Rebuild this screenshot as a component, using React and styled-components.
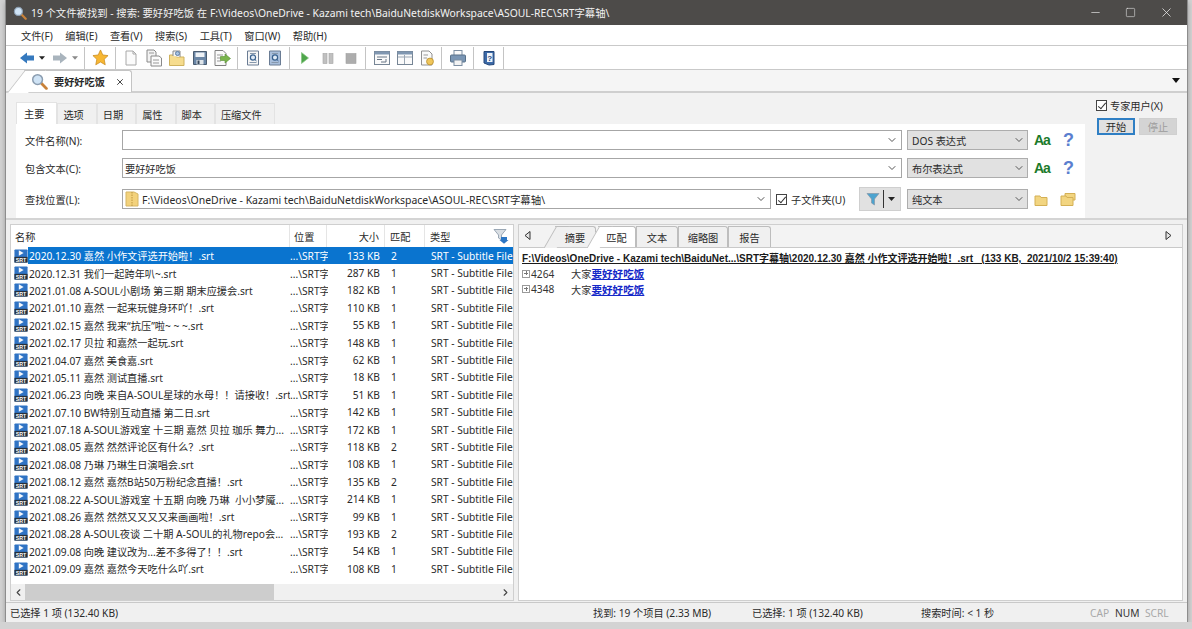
import React from "react";
import styled, { createGlobalStyle } from "styled-components";
import { Minus, Square, X, ChevronDown, ChevronLeft, ChevronRight } from "lucide-react";

const FONT = `"Noto Sans", "Noto Sans CJK SC", sans-serif`;

const MENUS = ["文件(F)", "编辑(E)", "查看(V)", "搜索(S)", "工具(T)", "窗口(W)", "帮助(H)"];
const SEARCH_TABS = ["主要", "选项", "日期", "属性", "脚本", "压缩文件"];
const PREVIEW_TABS = [
  { label: "摘要", width: 41 },
  { label: "匹配", width: 38, active: true },
  { label: "文本", width: 42 },
  { label: "缩略图", width: 50 },
  { label: "报告", width: 43 },
];

const FILES = [
  ["2020.12.30 嘉然 小作文评选开始啦！.srt", "133 KB", 2],
  ["2020.12.31 我们一起跨年叭~.srt", "287 KB", 1],
  ["2021.01.08 A-SOUL小剧场 第三期 期末应援会.srt", "182 KB", 1],
  ["2021.01.10 嘉然 一起来玩健身环吖！.srt", "110 KB", 1],
  ["2021.02.15 嘉然 我来“抗压”啦~ ~ ~.srt", "55 KB", 1],
  ["2021.02.17 贝拉 和嘉然一起玩.srt", "148 KB", 1],
  ["2021.04.07 嘉然 美食嘉.srt", "62 KB", 1],
  ["2021.05.11 嘉然 测试直播.srt", "18 KB", 1],
  ["2021.06.23 向晚 来自A-SOUL星球的水母！！请接收！.srt", "51 KB", 1],
  ["2021.07.10 BW特别互动直播 第二日.srt", "142 KB", 1],
  ["2021.07.18 A-SOUL游戏室 十三期 嘉然 贝拉 珈乐 舞力...", "172 KB", 1],
  ["2021.08.05 嘉然 然然评论区有什么？.srt", "118 KB", 2],
  ["2021.08.08 乃琳 乃琳生日演唱会.srt", "108 KB", 1],
  ["2021.08.12 嘉然 嘉然B站50万粉纪念直播！.srt", "135 KB", 2],
  ["2021.08.22 A-SOUL游戏室 十五期 向晚 乃琳  小小梦魇...", "214 KB", 1],
  ["2021.08.26 嘉然 然然又又又又来画画啦！.srt", "99 KB", 1],
  ["2021.08.28 A-SOUL夜谈 二十期 A-SOUL的礼物repo会...", "193 KB", 2],
  ["2021.09.08 向晚 建议改为...差不多得了！！.srt", "54 KB", 1],
  ["2021.09.09 嘉然 嘉然今天吃什么吖.srt", "108 KB", 1],
];

export default function App() {
  return (
    <>
      <GlobalStyle />
      <Window>
        <TitleBar>
          <Magnifier size={14} />
          <TitleText>19 个文件被找到 - 搜索: 要好好吃饭 在 F:\Videos\OneDrive - Kazami tech\BaiduNetdiskWorkspace\ASOUL-REC\SRT字幕轴\</TitleText>
          <WindowButtons>
            <Minus size={13} strokeWidth={1.2} />
            <Square size={11} strokeWidth={1.2} />
            <X size={15} strokeWidth={1.2} />
          </WindowButtons>
        </TitleBar>

        <MenuBar>
          {MENUS.map((m) => (
            <MenuItem key={m}>{m}</MenuItem>
          ))}
        </MenuBar>

        <ToolBar>
          <ToolGroup $gap={4}>
            <ArrowIcon color="#3579be" />
            <TinyCaret />
            <ForwardSlot>
              <ArrowIcon color="#a9b4bd" flip />
            </ForwardSlot>
            <TinyCaret light />
          </ToolGroup>
          <ToolGroup>
            <StarIcon />
          </ToolGroup>
          <ToolGroup $gap={5.5}>
            <DocIcon />
            <DocsIcon />
            <OpenIcon />
            <SaveIcon />
            <ExportIcon />
          </ToolGroup>
          <ToolGroup>
            <ReportIcon fill="#f6f6f6" />
            <ReportIcon fill="#a9bfdc" />
          </ToolGroup>
          <ToolGroup $gap={7}>
            <PlayIcon />
            <PauseIcon />
            <StopIcon />
          </ToolGroup>
          <ToolGroup $gap={5}>
            <PanelIcon />
            <PanelIcon split />
            <SettingsDocIcon />
          </ToolGroup>
          <ToolGroup>
            <PrinterIcon />
          </ToolGroup>
          <ToolGroup>
            <HelpBookIcon />
          </ToolGroup>
        </ToolBar>

        <DocStrip>
          <DocTab>
            <Magnifier size={17} />
            <DocTabLabel>要好好吃饭</DocTabLabel>
            <X size={10} strokeWidth={2} color="#222" />
          </DocTab>
          <StripCaret />
        </DocStrip>

        <SearchPanel>
          <SearchMain>
            <SearchTabs>
              {SEARCH_TABS.map((t, i) => (
                <SearchTab key={t} $active={i === 0}>{t}</SearchTab>
              ))}
            </SearchTabs>
            <SearchForm>
              <FormRow>
                <FieldLabel>文件名称(N):</FieldLabel>
                <ComboInput>
                  <ChevronDown size={12} color="#555" />
                </ComboInput>
                <GraySelect>
                  DOS 表达式
                  <ChevronDown size={12} color="#555" />
                </GraySelect>
                <CaseToggle>Aa</CaseToggle>
                <HelpMark>?</HelpMark>
              </FormRow>
              <FormRow>
                <FieldLabel>包含文本(C):</FieldLabel>
                <ComboInput>
                  <span>要好好吃饭</span>
                  <ChevronDown size={12} color="#555" />
                </ComboInput>
                <GraySelect>
                  布尔表达式
                  <ChevronDown size={12} color="#555" />
                </GraySelect>
                <CaseToggle>Aa</CaseToggle>
                <HelpMark>?</HelpMark>
              </FormRow>
              <LocationRow>
                <FieldLabel>查找位置(L):</FieldLabel>
                <LocationInput>
                  <FolderTreeIcon />
                  <LocationText>F:\Videos\OneDrive - Kazami tech\BaiduNetdiskWorkspace\ASOUL-REC\SRT字幕轴\</LocationText>
                  <ChevronDown size={12} color="#555" />
                </LocationInput>
                <SubfolderLabel>
                  <CheckBox />
                  子文件夹(U)
                </SubfolderLabel>
                <FilterButton>
                  <FilterIcon />
                  <FilterDivider />
                  <TinyCaret dark />
                </FilterButton>
                <GraySelect>
                  纯文本
                  <ChevronDown size={12} color="#555" />
                </GraySelect>
                <FolderPair>
                  <FolderIcon />
                  <FolderIcon stacked />
                </FolderPair>
              </LocationRow>
            </SearchForm>
          </SearchMain>
          <ExpertSide>
            <CheckLabel>
              <CheckBox />
              专家用户(X)
            </CheckLabel>
            <ButtonRow>
              <StartButton>开始</StartButton>
              <StopButton>停止</StopButton>
            </ButtonRow>
          </ExpertSide>
        </SearchPanel>

        <Panes>
          <ResultsPane>
            <ListHead>
              <NameHead>名称</NameHead>
              <PathHead>位置</PathHead>
              <SizeHead>大小</SizeHead>
              <HitsHead>匹配</HitsHead>
              <TypeHead>
                类型
                <FunnelBadge />
              </TypeHead>
            </ListHead>
            <ListBody>
              {FILES.map(([name, size, hits], i) => (
                <FileRow key={name}>
                  <SrtIcon />
                  <RowCells $selected={i === 0}>
                    <NameCell>{name}</NameCell>
                    <PathCell>...\SRT字</PathCell>
                    <SizeCell>{size}</SizeCell>
                    <HitsCell>{hits}</HitsCell>
                    <TypeCell>SRT - Subtitle File</TypeCell>
                  </RowCells>
                </FileRow>
              ))}
            </ListBody>
            <ScrollBar>
              <ChevronLeft size={11} color="#444" strokeWidth={2.4} />
              <ScrollTrack>
                <ScrollThumb />
              </ScrollTrack>
              <ChevronRight size={11} color="#444" strokeWidth={2.4} />
            </ScrollBar>
          </ResultsPane>

          <PreviewPane>
            <PreviewStrip>
              <StripArrow points="6,0.5 1,4.5 6,8.5" />
              <PreviewTabs>
                {PREVIEW_TABS.map((t, i) => (
                  <PreviewTab key={t.label} $w={t.width} $active={t.active} $slant={i < 2}>{t.label}</PreviewTab>
                ))}
              </PreviewTabs>
              <StripArrow points="1,0.5 6,4.5 1,8.5" />
            </PreviewStrip>
            <PreviewBody>
              <PreviewPath>F:\Videos\OneDrive - Kazami tech\BaiduNet...\SRT字幕轴\2020.12.30 嘉然 小作文评选开始啦！.srt   (133 KB,  2021/10/2 15:39:40)</PreviewPath>
              <MatchLine>
                <ExpandBox />
                <LineNo>4264</LineNo>
                <span>大家</span>
                <MatchHit>要好好吃饭</MatchHit>
              </MatchLine>
              <MatchLine>
                <ExpandBox />
                <LineNo>4348</LineNo>
                <span>大家</span>
                <MatchHit>要好好吃饭</MatchHit>
              </MatchLine>
            </PreviewBody>
          </PreviewPane>
        </Panes>

        <StatusBar>
          <StatusSelected>已选择 1 项 (132.40 KB)</StatusSelected>
          <StatusFound>找到: 19 个项目 (2.33 MB)</StatusFound>
          <StatusPicked>已选择: 1 项 (132.40 KB)</StatusPicked>
          <StatusTime>搜索时间: &lt; 1 秒</StatusTime>
          <LockKey $w={25}>CAP</LockKey>
          <LockKey $w={30} $on>NUM</LockKey>
          <LockKey $w={30}>SCRL</LockKey>
        </StatusBar>
      </Window>
    </>
  );
}

// Icons
function Magnifier({ size }) {
  return (
    <svg width={size} height={size} viewBox="0 0 16 16">
      <path d="M9.5 9.5 L14.5 14.5" stroke="#c8823a" strokeWidth="2.6" strokeLinecap="round" />
      <circle cx="6.2" cy="6.2" r="4.6" fill="#cfe3f5" stroke="#8b9db0" strokeWidth="1.4" />
    </svg>
  );
}
function ArrowIcon({ color, flip }) {
  return (
    <IconSvg viewBox="0 0 16 16" style={{ transform: flip ? "scaleX(-1)" : undefined }}>
      <path d="M1 8 L8 2.5 V5.5 H15 V10.5 H8 V13.5 Z" fill={color} />
    </IconSvg>
  );
}
function StarIcon() {
  return (
    <IconSvg viewBox="0 0 18 18" $size={17}>
      <path d="M9 1 L11.4 6.3 L17 7 L12.9 10.9 L14 16.7 L9 13.8 L4 16.7 L5.1 10.9 L1 7 L6.6 6.3 Z" fill="#f7b733" stroke="#c98a1d" strokeWidth="0.8" />
    </IconSvg>
  );
}
function DocIcon() {
  return (
    <IconSvg viewBox="0 0 16 16">
      <path d="M3 1 H10 L13 4 V15 H3 Z" fill="#fbfbfb" stroke="#a8a8a8" />
      <path d="M10 1 V4 H13" fill="none" stroke="#a8a8a8" />
    </IconSvg>
  );
}
function DocsIcon() {
  return (
    <IconSvg viewBox="0 0 18 18" $size={18}>
      <path d="M2 1 H9 L11 3 V13 H2 Z" fill="#f3f3f3" stroke="#8a8a8a" />
      <path d="M6 7 H14 L16.5 9 V17 H6 Z" fill="#fbfbfb" stroke="#8a8a8a" />
      <path d="M4 4 H9 M8 11 H14 M8 14 H14" stroke="#999" />
    </IconSvg>
  );
}
function OpenIcon() {
  return (
    <IconSvg viewBox="0 0 18 18" $size={18}>
      <path d="M1.5 6 H7 L8.5 8 H16 V16.5 H1.5 Z" fill="#f6dc8e" stroke="#cfb25e" />
      <path d="M5 7 V2 H12 V8" fill="#f4f4f4" stroke="#8a8a8a" />
      <circle cx="9.5" cy="4.5" r="2" fill="#a9c4e3" stroke="#5c7ea6" />
    </IconSvg>
  );
}
function SaveIcon() {
  return (
    <IconSvg viewBox="0 0 16 16">
      <path d="M1.5 1.5 H14.5 V14.5 H1.5 Z" fill="#6a86a6" stroke="#4a5c70" />
      <rect x="3.5" y="2.5" width="9" height="4.5" fill="#eef2f6" />
      <rect x="4.5" y="10" width="7" height="4.5" fill="#dfe5ea" />
      <rect x="5.5" y="10.5" width="2" height="3.5" fill="#37475a" />
    </IconSvg>
  );
}
function ExportIcon() {
  return (
    <IconSvg viewBox="0 0 18 18" $size={18}>
      <path d="M2 1.5 H10 L13 4.5 V16.5 H2 Z" fill="#fafafa" stroke="#808080" />
      <path d="M4 6 H10 M4 9 H8 M4 12 H8" stroke="#999" />
      <path d="M7.5 7.5 H12 V5 L17.5 9.5 L12 14 V11.5 H7.5 Z" fill="#7ab54c" stroke="#568f30" strokeWidth="0.6" />
    </IconSvg>
  );
}
function ReportIcon({ fill }) {
  return (
    <IconSvg viewBox="0 0 16 16">
      <path d="M2.5 1 H13.5 V15 H2.5 Z" fill={fill} stroke="#6a7c94" />
      <path d="M5 3.5 H11 M4.5 12.5 H11.5" stroke="#8798ac" />
      <circle cx="8" cy="7.5" r="2.6" fill="#dfeaf6" stroke="#38618f" strokeWidth="1.2" />
      <path d="M9.8 9.5 L11.5 11" stroke="#38618f" />
    </IconSvg>
  );
}
function PlayIcon() {
  return (
    <IconSvg viewBox="0 0 16 16">
      <path d="M4.5 2.5 L11.5 8 L4.5 13.5 Z" fill="#4fa64b" stroke="#85c583" strokeWidth="0.7" />
    </IconSvg>
  );
}
function PauseIcon() {
  return (
    <IconSvg viewBox="0 0 16 16">
      <rect x="3" y="3.5" width="4" height="10" fill="#c0c0c0" stroke="#a3a3a3" strokeWidth="0.6" />
      <rect x="9" y="3.5" width="4" height="10" fill="#c0c0c0" stroke="#a3a3a3" strokeWidth="0.6" />
    </IconSvg>
  );
}
function StopIcon() {
  return (
    <IconSvg viewBox="0 0 16 16">
      <rect x="3" y="3.5" width="10" height="10" fill="#adadad" stroke="#a0a0a0" strokeWidth="0.6" />
    </IconSvg>
  );
}
function PanelIcon({ split }) {
  return (
    <IconSvg viewBox="0 0 18 18" $size={18}>
      <rect x="1.5" y="2.5" width="15" height="13" fill="#fafafa" stroke="#768595" />
      <rect x="1.5" y="2.5" width="15" height="3" fill="#8097b1" />
      {split ? (
        <path d="M8.5 6 V15 M2 8 H16" stroke="#9aa6b3" />
      ) : (
        <path d="M4 8 H14 M4 10.5 H9 M13 10 V13 H8" stroke="#687686" fill="none" />
      )}
    </IconSvg>
  );
}
function SettingsDocIcon() {
  return (
    <IconSvg viewBox="0 0 16 16">
      <path d="M2.5 1 H10 L13 4 V15 H2.5 Z" fill="#fafafa" stroke="#909090" />
      <path d="M4.5 5 H9 M4.5 8 H8" stroke="#999" />
      <circle cx="11" cy="11.5" r="3.4" fill="#f0c65a" stroke="#c39a3a" />
    </IconSvg>
  );
}
function PrinterIcon() {
  return (
    <IconSvg viewBox="0 0 18 18" $size={18}>
      <rect x="5" y="1.5" width="8" height="5" fill="#fafafa" stroke="#7d8fa3" />
      <rect x="1.5" y="6" width="15" height="7" rx="1" fill="#7a96b5" stroke="#587189" />
      <rect x="5" y="11" width="8" height="5.5" fill="#f3f3f3" stroke="#7d8fa3" />
    </IconSvg>
  );
}
function HelpBookIcon() {
  return (
    <IconSvg viewBox="0 0 16 16">
      <path d="M3 1.5 H13 V14.5 L8 15 L3 13 Z" fill="#3c6aa8" stroke="#24477a" />
      <rect x="6" y="3" width="5.5" height="9" fill="#eef3f9" />
      <text x="8.7" y="10.5" fontSize="8" fontWeight="700" textAnchor="middle" fill="#24477a" fontFamily="Liberation Sans">?</text>
    </IconSvg>
  );
}
function TinyCaret({ light, dark }) {
  return (
    <CaretSvg viewBox="0 0 7 4" $w={dark ? 9 : 6}>
      <path d="M0 0 H7 L3.5 4 Z" fill={light ? "#8a8a8a" : "#222"} />
    </CaretSvg>
  );
}
function FolderTreeIcon() {
  return (
    <svg width="14" height="16" viewBox="0 0 14 16">
      <path d="M1 1 H9 L13 3 V15 H1 Z" fill="#f3d27c" stroke="#d6b665" />
      <path d="M7 1 V15" stroke="#bd9640" strokeDasharray="1.5 1" />
    </svg>
  );
}
function FolderIcon({ stacked }) {
  return (
    <svg width="16" height="15" viewBox="0 0 16 15">
      {stacked && <path d="M5 1.5 H15 V8 H5 Z" fill="#f2d581" stroke="#d4b055" />}
      <path d="M1 4 H6 L7 5.5 H13 V13.5 H1 Z" fill="#f2d581" stroke="#d4b055" />
    </svg>
  );
}
function FilterIcon() {
  return (
    <svg width="14" height="14" viewBox="0 0 14 14">
      <path d="M1 1.5 H13 L8.5 7 V13 L5.5 11 V7 Z" fill="#4ca3cf" stroke="#8796a6" strokeWidth="0.7" />
    </svg>
  );
}
function FunnelBadge() {
  return (
    <BadgeSvg viewBox="0 0 16 16">
      <path d="M1 1.5 H13 L8.5 7 V12 L5.5 10 V7 Z" fill="#d9dee3" stroke="#8796a6" strokeWidth="0.8" />
      <path d="M8 9 H14 V12 H15.5 L11 15.8 L6.5 12 H8 Z" fill="#2c76c4" />
    </BadgeSvg>
  );
}
function SrtIcon() {
  return (
    <SrtSvg viewBox="0 0 16 16">
      <rect x="0.5" y="0.5" width="15" height="15" rx="1" fill="#2f73c4" />
      <path d="M5.5 1.5 L11 4.6 L5.5 7.6 Z" fill="#f5f8fc" />
      <rect x="0.5" y="9" width="15" height="6.5" fill="#27303a" />
      <text x="8" y="14.6" fontSize="6" fontWeight="700" textAnchor="middle" fill="#fff" fontFamily="Liberation Sans">SRT</text>
    </SrtSvg>
  );
}
function StripArrow({ points }) {
  return (
    <ArrowSvg viewBox="0 0 7 9">
      <polygon points={points} fill="#e4e4e4" stroke="#333" />
    </ArrowSvg>
  );
}

// Styled Components
const GlobalStyle = createGlobalStyle`
  html, body {
    margin: 0;
    padding: 0;
    background: #d3d3d3;
    overflow: hidden;
  }
  * {
    box-sizing: border-box;
  }
`;

const Window = styled.div`
  width: 1181px;
  height: 622px;
  margin-left: 6px;
  display: flex;
  flex-direction: column;
  background: #f0f0f0;
  font-family: ${FONT};
  font-size: 10.2px;
  color: #2a2a2a;
  box-shadow: 0 0 0 1px #8d8d8d, 0 2px 6px rgba(0, 0, 0, 0.35);
`;

const TitleBar = styled.div`
  height: 25px;
  flex: none;
  background: #4d4b49;
  color: #f2f2f2;
  display: flex;
  align-items: center;
  padding-left: 7px;
  gap: 4px;
`;

const TitleText = styled.div`
  font-size: 10.35px;
  white-space: pre;
`;

const WindowButtons = styled.div`
  margin-left: auto;
  display: flex;
  align-items: center;
  gap: 23px;
  padding-right: 13px;
  color: #eee;
`;

const MenuBar = styled.div`
  height: 21px;
  flex: none;
  background: #fff;
  border-bottom: 1px solid #c9c9c9;
  display: flex;
  align-items: center;
  padding-left: 15px;
  gap: 12.5px;
`;

const MenuItem = styled.span`
  white-space: nowrap;
`;

const ToolBar = styled.div`
  height: 24px;
  flex: none;
  background: #fff;
  border-bottom: 1px solid #c9c9c9;
  display: flex;
  align-items: center;
  padding-left: 6px;
`;

const ToolGroup = styled.div`
  display: flex;
  align-items: center;
  gap: ${(p) => p.$gap ?? 6}px;
  padding: 0 6px 0 7px;
  height: 22px;
  border-right: 1px solid #c4c4c4;
`;

const ForwardSlot = styled.span`
  display: flex;
  margin-left: 3px;
`;

const IconSvg = styled.svg`
  width: ${(p) => p.$size || 16}px;
  height: ${(p) => p.$size || 16}px;
  flex: none;
`;

const CaretSvg = styled.svg`
  width: ${(p) => p.$w}px;
  height: 4px;
  flex: none;
`;

const DocStrip = styled.div`
  height: 23px;
  flex: none;
  background: #f5f5f5;
  border-bottom: 2px solid #cfcfcf;
  display: flex;
  align-items: flex-end;
  justify-content: space-between;
  padding: 0 7px 0 18px;
`;

const DocTab = styled.div`
  position: relative;
  z-index: 0;
  width: 108px;
  height: 22px;
  margin-bottom: -1px;
  display: flex;
  align-items: center;
  padding-left: 7px;
  background: #fff;
  border: 1px solid #c4c4c4;
  border-left: none;
  border-bottom: none;
  border-radius: 0 3px 0 0;

  &::before {
    content: "";
    position: absolute;
    z-index: -1;
    left: -8px;
    top: -1px;
    width: 20px;
    height: 22px;
    background: #fff;
    border-left: 1px solid #c4c4c4;
    border-top: 1px solid #c4c4c4;
    transform: skewX(-38deg);
  }
`;

const DocTabLabel = styled.span`
  font-weight: 700;
  margin: 0 10px 0 6px;
`;

const StripCaret = styled.div`
  width: 0;
  height: 0;
  margin-bottom: 8px;
  border-left: 4px solid transparent;
  border-right: 4px solid transparent;
  border-top: 5px solid #111;
`;

const SearchPanel = styled.div`
  height: 127px;
  flex: none;
  display: flex;
  padding: 10px 0 0 10px;
  background: #f2f2f2;
  border-bottom: 2px solid #d4d4d4;
`;

const SearchMain = styled.div`
  width: 1069px;
  display: flex;
  flex-direction: column;
`;

const SearchTabs = styled.div`
  display: flex;
  height: 21px;
  flex: none;
`;

const SearchTab = styled.div`
  display: flex;
  align-items: center;
  white-space: nowrap;
  padding: 0 12px 0 ${(p) => (p.$active ? "7px" : "5px")};
  background: ${(p) => (p.$active ? "#fff" : "#f0f0f0")};
  border: 1px solid #e3e3e3;
  border-bottom: none;
  margin-top: ${(p) => (p.$active ? "-1px" : "0")};
`;

const SearchForm = styled.div`
  flex: 1;
  background: #fff;
  padding: 6px 0 0 9px;
  display: flex;
  flex-direction: column;
  gap: 8px;
`;

const FormRow = styled.div`
  display: flex;
  align-items: center;
  height: 20px;
`;

const LocationRow = styled(FormRow)`
  margin-top: 3px;
`;

const FieldLabel = styled.div`
  width: 97px;
  flex: none;
`;

const ComboInput = styled.div`
  width: 780px;
  height: 20px;
  flex: none;
  display: flex;
  align-items: center;
  padding: 0 3px 0 2px;
  background: #fff;
  border: 1px solid #a6a6a6;

  svg:last-child {
    margin-left: auto;
  }
`;

const LocationInput = styled(ComboInput)`
  width: 649px;
  gap: 3px;
`;

const LocationText = styled.span`
  font-size: 10.45px;
  white-space: pre;
`;

const GraySelect = styled.div`
  width: 121px;
  height: 20px;
  flex: none;
  margin-left: 5px;
  padding: 0 2px 0 4px;
  display: flex;
  align-items: center;
  justify-content: space-between;
  background: #e1e1e1;
  border: 1px solid #adadad;
`;

const CaseToggle = styled.span`
  width: 14px;
  margin-left: 6px;
  font: 700 14px "Liberation Sans", sans-serif;
  letter-spacing: -1px;
  color: #1c7a2b;
  white-space: nowrap;
`;

const HelpMark = styled.span`
  margin-left: 15px;
  font: 700 18px "Liberation Sans", sans-serif;
  color: #5b7fcf;
`;

const CheckLabel = styled.label`
  display: flex;
  align-items: center;
  gap: 3px;
  white-space: nowrap;
`;

const SubfolderLabel = styled(CheckLabel)`
  width: 83px;
  flex: none;
  margin-left: 5px;
  gap: 4px;
`;

const CheckBox = styled.span`
  position: relative;
  width: 11px;
  height: 11px;
  flex: none;
  background: #fff;
  border: 1px solid #444;

  &::after {
    content: "";
    position: absolute;
    left: 3px;
    top: 0;
    width: 3px;
    height: 7px;
    border: solid #333;
    border-width: 0 1px 1px 0;
    transform: rotate(40deg);
  }
`;

const FilterButton = styled.div`
  width: 42px;
  height: 24px;
  flex: none;
  margin-right: 1px;
  padding: 0 4px 0 6px;
  display: flex;
  align-items: center;
  justify-content: space-between;
  background: #e1e1e1;
  border: 1px solid #cfcfcf;
`;

const FilterDivider = styled.span`
  width: 1px;
  height: 18px;
  background: #333;
`;

const FolderPair = styled.div`
  display: flex;
  gap: 10px;
  margin-left: 6px;
`;

const ExpertSide = styled.div`
  margin-top: -5px;
  padding: 0 0 0 11px;
  display: flex;
  flex-direction: column;
  gap: 5px;
`;

const ButtonRow = styled.div`
  display: flex;
  gap: 4px;
  padding-left: 1px;
`;

const StartButton = styled.div`
  width: 38px;
  height: 17px;
  display: flex;
  align-items: center;
  justify-content: center;
  background: #e1e1e1;
  border: 2px solid #2f7fc4;
`;

const StopButton = styled(StartButton)`
  background: #d4d4d4;
  border: 1px solid #d0d0d0;
  color: #9c9c9c;
`;

const Panes = styled.div`
  flex: 1;
  min-height: 0;
  display: flex;
  gap: 4px;
  padding: 4px 4px 1px 4px;
  background: #f0f0f0;
`;

const ResultsPane = styled.div`
  width: 504px;
  flex: none;
  display: flex;
  flex-direction: column;
  background: #fff;
  border: 1px solid #cfcfcf;
`;

const ListHead = styled.div`
  height: 22px;
  flex: none;
  display: flex;
  align-items: center;
  background: #fff;
`;

const HeadCell = styled.div`
  height: 100%;
  display: flex;
  align-items: center;
  border-right: 1px solid #e5e5e5;
  padding: 0 4px;
`;

const NameHead = styled(HeadCell)`
  width: 279px;
`;
const PathHead = styled(HeadCell)`
  width: 37px;
`;
const SizeHead = styled(HeadCell)`
  width: 58px;
  justify-content: flex-end;
  padding-right: 5px;
`;
const HitsHead = styled(HeadCell)`
  width: 40px;
  padding-left: 5px;
`;
const TypeHead = styled(HeadCell)`
  flex: 1;
  padding: 0 4px 0 5px;
  border-right: none;
  justify-content: space-between;
`;

const BadgeSvg = styled.svg`
  width: 16px;
  height: 16px;
`;

const ListBody = styled.div`
  flex: 1;
  min-height: 0;
  overflow: hidden;
`;

const FileRow = styled.div`
  height: 17.4px;
  display: flex;
  align-items: center;
  padding-left: 3px;
`;

const SrtSvg = styled.svg`
  width: 14px;
  height: 14px;
  flex: none;
`;

const RowCells = styled.div`
  flex: 1;
  min-width: 0;
  height: 100%;
  display: flex;
  align-items: center;
  padding-left: 1px;
  overflow: hidden;
  white-space: pre;
  background: ${(p) => (p.$selected ? "#0a74cf" : "transparent")};
  color: ${(p) => (p.$selected ? "#fff" : "#2a2a2a")};
`;

const NameCell = styled.span`
  width: 261px;
  flex: none;
  overflow: hidden;
`;
const PathCell = styled.span`
  width: 38px;
  flex: none;
  overflow: hidden;
`;
const SizeCell = styled.span`
  width: 52px;
  flex: none;
  text-align: right;
`;
const HitsCell = styled.span`
  width: 51px;
  flex: none;
  padding-left: 11px;
`;
const TypeCell = styled.span`
  flex: 1;
  overflow: hidden;
`;

const ScrollBar = styled.div`
  height: 16px;
  flex: none;
  display: flex;
  align-items: center;
  padding: 0 2px;
  background: #f0f0f0;
`;

const ScrollTrack = styled.div`
  flex: 1;
  height: 100%;
  padding: 0 1px;
`;

const ScrollThumb = styled.div`
  width: 249px;
  height: 100%;
  background: #cdcdcd;
`;

const PreviewPane = styled.div`
  flex: 1;
  min-width: 0;
  display: flex;
  flex-direction: column;
  border: 1px solid #cfcfcf;
  background: #f3f3f3;
`;

const PreviewStrip = styled.div`
  height: 22px;
  flex: none;
  display: flex;
  align-items: flex-end;
  justify-content: space-between;
  padding: 0 10px 0 5px;
`;

const ArrowSvg = styled.svg`
  width: 7px;
  height: 9px;
  flex: none;
  margin-bottom: 7px;
`;

const PreviewTabs = styled.div`
  flex: 1;
  display: flex;
  padding-left: 24px;
  height: 21px;
`;

const PreviewTab = styled.div`
  position: relative;
  z-index: ${(p) => (p.$active ? 1 : 0)};
  width: ${(p) => p.$w}px;
  flex: none;
  margin-left: ${(p) => (p.$active ? "2px" : "0")};
  display: flex;
  align-items: center;
  justify-content: center;
  background: ${(p) => (p.$active ? "#fff" : "#f0f0f0")};
  border: 1px solid #bdbdbd;
  border-left: ${(p) => (p.$slant ? "none" : "1px solid #bdbdbd")};
  border-bottom: none;
  border-radius: 0 3px 0 0;

  ${(p) =>
    p.$slant &&
    `
    &::before {
      content: "";
      position: absolute;
      z-index: -1;
      left: -5px;
      top: -1px;
      width: 12px;
      height: 21px;
      background: ${p.$active ? "#fff" : "#f0f0f0"};
      border-left: 1px solid #bdbdbd;
      border-top: 1px solid #bdbdbd;
      transform: skewX(-30deg);
    }
  `}
`;

const PreviewBody = styled.div`
  flex: 1;
  background: #fff;
  border-top: 1px solid #c9c9c9;
  padding: 3px 0 0 3px;
`;

const PreviewPath = styled.div`
  font-family: "Liberation Sans", "Noto Sans CJK SC", sans-serif;
  font-size: 10px;
  font-weight: 700;
  text-decoration: underline;
  white-space: pre;
  height: 15px;
  line-height: 15px;
  color: #1a1a1a;
`;

const MatchLine = styled.div`
  height: 15.5px;
  display: flex;
  align-items: center;
  color: #333;
`;

const ExpandBox = styled.span`
  position: relative;
  width: 8px;
  height: 8px;
  flex: none;
  border: 1px solid #9a9a9a;
  margin-right: 1px;

  &::before {
    content: "";
    position: absolute;
    left: 1px;
    top: 2px;
    width: 4px;
    height: 1px;
    background: #777;
  }
  &::after {
    content: "";
    position: absolute;
    left: 2.5px;
    top: 0.5px;
    width: 1px;
    height: 4px;
    background: #777;
  }
`;

const LineNo = styled.span`
  width: 40px;
  flex: none;
`;

const MatchHit = styled.span`
  font-size: 10.6px;
  font-weight: 700;
  color: #1428c8;
  text-decoration: underline;
`;

const StatusBar = styled.div`
  height: 20px;
  flex: none;
  display: flex;
  align-items: center;
  padding-left: 4px;
  background: #f0f0f0;
  border-top: 1px solid #c9c9c9;
`;

const StatusSelected = styled.span`
  width: 583px;
  flex: none;
`;
const StatusFound = styled.span`
  width: 159px;
  flex: none;
`;
const StatusPicked = styled.span`
  width: 169px;
  flex: none;
`;
const StatusTime = styled.span`
  width: 169px;
  flex: none;
`;

const LockKey = styled.span`
  width: ${(p) => p.$w}px;
  flex: none;
  color: ${(p) => (p.$on ? "#333" : "#a8a8a8")};
`;
